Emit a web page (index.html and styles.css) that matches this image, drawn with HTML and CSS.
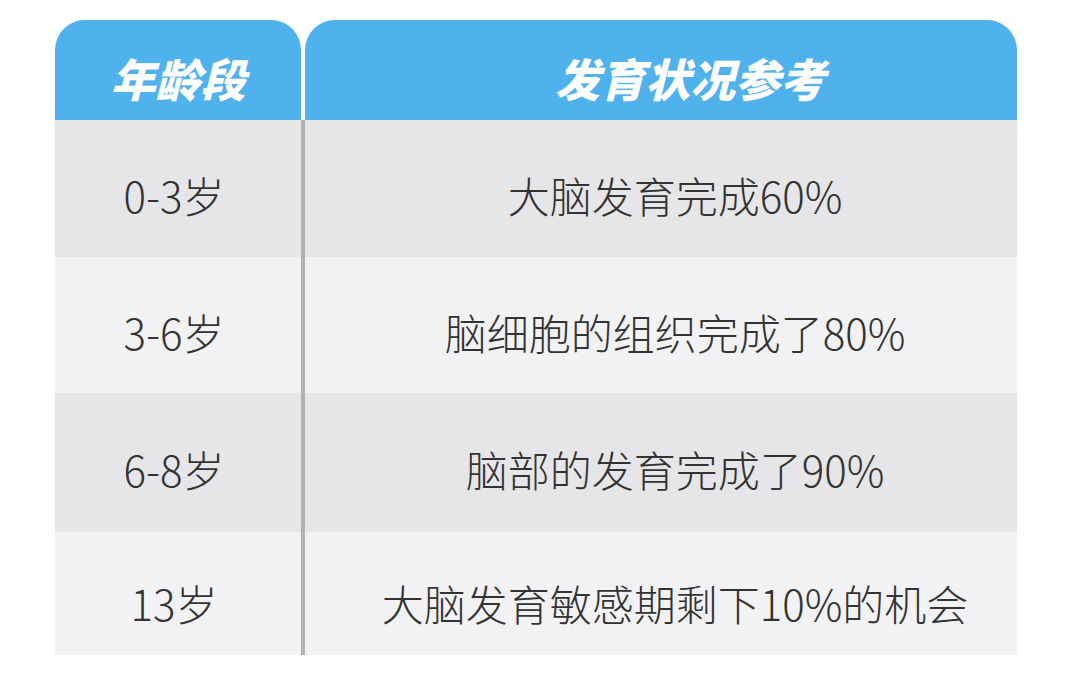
FILE: index.html
```html
<!DOCTYPE html>
<html lang="zh">
<head>
<meta charset="utf-8">
<link rel="stylesheet" href="styles.css">
</head>
<body>
<div class="page">
  <div class="table">
    <div class="row head">
      <div class="cell left"><span>年龄段</span></div>
      <div class="sep"></div>
      <div class="cell right"><span>发育状况参考</span></div>
    </div>
    <div class="row r1 dark">
      <div class="cell left">0-3岁</div>
      <div class="sep"></div>
      <div class="cell right">大脑发育完成60%</div>
    </div>
    <div class="row r2 light">
      <div class="cell left">3-6岁</div>
      <div class="sep"></div>
      <div class="cell right">脑细胞的组织完成了80%</div>
    </div>
    <div class="row r3 dark">
      <div class="cell left">6-8岁</div>
      <div class="sep"></div>
      <div class="cell right">脑部的发育完成了90%</div>
    </div>
    <div class="row r4 light">
      <div class="cell left">13岁</div>
      <div class="sep"></div>
      <div class="cell right">大脑发育敏感期剩下10%的机会</div>
    </div>
  </div>
</div>
</body>
</html>
```
FILE: styles.css
```css
html, body {
  margin: 0;
  padding: 0;
  background: #ffffff;
}
.page {
  width: 1080px;
  height: 686px;
  padding: 20px 0 0 55px;
  box-sizing: border-box;
}
.table {
  width: 962px;
  display: flex;
  flex-direction: column;
}
.row {
  display: grid;
  grid-template-columns: 246px 4px 712px;
}
.cell {
  display: flex;
  align-items: center;
  justify-content: center;
  box-sizing: border-box;
  padding-top: 13px;
  font-family: "Noto Sans CJK SC", "Noto Sans", sans-serif;
  font-size: 42px;
  font-weight: 300;
  line-height: 1;
  color: #333333;
}
.cell.left {
  padding-right: 8px;
}
.cell.right {
  padding-left: 28px;
}
.head {
  height: 100px;
}
.head .cell {
  background: #50b2ec;
  border-radius: 30px 30px 0 0;
  color: #ffffff;
  font-weight: 900;
  font-style: italic;
  font-size: 45px;
  padding-top: 14px;
}
.head .cell.left {
  padding-right: 0;
}
.head .cell.right {
  padding-left: 58px;
}
.head .sep {
  background: #ffffff;
}
.dark .cell { background: #e6e6e8; }
.light .cell { background: #f2f2f4; }
.dark .sep, .light .sep { background: #b2b2b4; }
.r1 { height: 137px; }
.r2 { height: 136px; }
.r3 { height: 139px; }
.r4 { height: 123px; }
.r4 .cell { padding-top: 19px; }
```
